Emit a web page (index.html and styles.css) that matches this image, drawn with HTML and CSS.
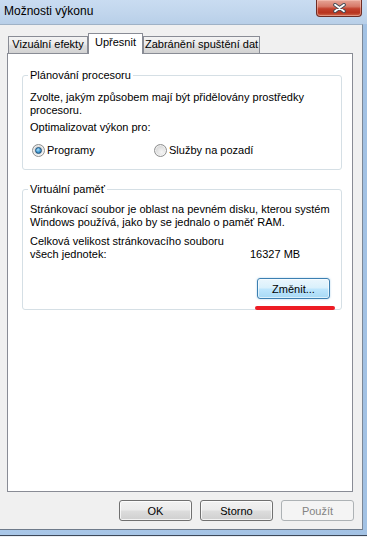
FILE: index.html
```html
<!DOCTYPE html>
<html lang="cs">
<head>
    <meta charset="UTF-8">
    <meta name="viewport" content="width=device-width, initial-scale=1.0">
    <title>Možnosti výkonu</title>
    <link rel="stylesheet" href="styles.css">
</head>
<body>
    <div class="window">
        <div class="titlebar">
            <span class="title">Možnosti výkonu</span>
            <div class="close">
                <svg width="13" height="10" viewBox="0 0 13 10">
                    <path d="M2 1.8 L11 8.2 M11 1.8 L2 8.2" stroke="#3f4a55" stroke-width="3.6" stroke-linecap="round"/>
                    <path d="M2 1.8 L11 8.2 M11 1.8 L2 8.2" stroke="#ffffff" stroke-width="1.8" stroke-linecap="round"/>
                </svg>
            </div>
        </div>

        <div class="client">
            <div class="tabs">
                <div class="tab tab-visual">Vizuální efekty</div>
                <div class="tab tab-active">Upřesnit</div>
                <div class="tab tab-dep">Zabránění spuštění dat</div>
            </div>

            <div class="panel">
                <fieldset class="group group-cpu">
                    <legend>Plánování procesoru</legend>
                    <p>Zvolte, jakým způsobem mají být přidělovány prostředky<br>procesoru.</p>
                    <p class="optimize">Optimalizovat výkon pro:</p>
                    <div class="radios">
                        <label class="radio"><span class="dot checked"></span>Programy</label>
                        <label class="radio"><span class="dot"></span>Služby na pozadí</label>
                    </div>
                </fieldset>

                <fieldset class="group group-vm">
                    <legend>Virtuální paměť</legend>
                    <p>Stránkovací soubor je oblast na pevném disku, kterou systém<br>Windows používá, jako by se jednalo o paměť RAM.</p>
                    <div class="total">
                        <span>Celková velikost stránkovacího souboru<br>všech jednotek:</span>
                        <span>16327 MB</span>
                    </div>
                    <div class="actions">
                        <button class="btn btn-default">Změnit...</button>
                        <span class="mark"></span>
                    </div>
                </fieldset>
            </div>

            <div class="buttons">
                <button class="btn">OK</button>
                <button class="btn">Storno</button>
                <button class="btn" disabled>Použít</button>
            </div>
        </div>
    </div>
</body>
</html>
```

FILE: styles.css
```css
html {
    background-color: #e9eef4;
}
body {
    margin: 0;
    font-family: "Liberation Sans", Arial, sans-serif;
    font-size: 11px;
    color: #000;
}
.window {
    width: 367px;
    height: 535px;
    border-bottom: 1px solid #3d4858;
    background: linear-gradient(90deg, #a9c7e8, #a3c2e4);
}
.titlebar {
    height: 24px;
    display: flex;
    justify-content: space-between;
    align-items: flex-start;
    background: linear-gradient(180deg, #c9dcf1 0%, #c0d5ec 60%, #b8cfe8 100%);
}
.title {
    padding-left: 4px;
    margin-top: 4px;
    font-size: 12px;
    line-height: 14px;
    color: #000;
}
.close {
    width: 46px;
    height: 17px;
    margin-right: 5px;
    box-sizing: border-box;
    border: 1px solid #6e2c24;
    border-top: none;
    border-radius: 0 0 4px 4px;
    background: linear-gradient(180deg, #e6a597 0%, #d77a69 40%, #c2412d 55%, #b8341f 80%, #cf6a4d 100%);
    box-shadow: inset 0 0 0 1px rgba(255, 210, 200, 0.45);
    display: flex;
    align-items: center;
    justify-content: center;
}
.client {
    width: 363px;
    height: 506px;
    box-sizing: border-box;
    border-top: 1px solid #9fb2c6;
    border-right: 1px solid #7c8796;
    border-bottom: 1px solid #6f7b8b;
    background-color: #f0f0f0;
    padding: 8px 9px 8px 7px;
}
.tabs {
    display: flex;
    align-items: flex-end;
    height: 20px;
    padding-left: 1px;
}
.tab {
    box-sizing: border-box;
    height: 17px;
    border: 1px solid #898c95;
    border-bottom: none;
    background: linear-gradient(180deg, #f3f3f3 0%, #ebebeb 45%, #dedede 55%, #d2d2d2 100%);
    text-align: center;
    line-height: 15px;
    white-space: nowrap;
}
.tab-visual {
    width: 80px;
}
.tab-active {
    width: 55px;
    height: 21px;
    margin-bottom: -1px;
    padding-top: 1px;
    background: #fff;
    position: relative;
    z-index: 1;
}
.tab-dep {
    width: 117px;
}
.panel {
    height: 439px;
    box-sizing: border-box;
    border: 1px solid #898c95;
    background-color: #fff;
    padding: 15px 0 0 14px;
}
.group {
    width: 320px;
    box-sizing: border-box;
    margin: 0;
    min-width: 0;
    border: 1px solid #d5dfe5;
    border-radius: 3px;
    padding: 9px 11px 12px 7px;
}
.group legend {
    padding: 0 2px;
    margin-left: -2px;
    line-height: 13px;
}
.group p {
    margin: 0;
    line-height: 13px;
    white-space: nowrap;
}
.group .optimize {
    margin-top: 4px;
}
.radios {
    display: grid;
    grid-template-columns: 122px auto;
    margin-top: 10px;
    padding-left: 2px;
}
.radio {
    display: flex;
    align-items: center;
    gap: 2px;
    line-height: 13px;
}
.dot {
    width: 13px;
    height: 13px;
    box-sizing: border-box;
    border-radius: 50%;
    border: 1px solid #8e8f8f;
    background: radial-gradient(circle at 60% 65%, #f6f6f6 0%, #e2e2e2 45%, #c9c9c9 100%);
    box-shadow: inset 0 0 0 1px rgba(255, 255, 255, 0.6);
}
.dot.checked::after {
    content: "";
    display: block;
    width: 7px;
    height: 7px;
    margin: 2px;
    box-sizing: border-box;
    border-radius: 50%;
    border: 1px solid #1d4f78;
    background: radial-gradient(circle at 40% 35%, #b4e0fa 0%, #4ea6dc 45%, #1b5d93 100%);
}
.group-vm {
    margin-top: 13px;
    padding-top: 7px;
    padding-bottom: 10px;
}
.total {
    display: grid;
    grid-template-columns: 220px auto;
    align-items: end;
    margin-top: 6px;
    line-height: 13px;
    white-space: nowrap;
}
.actions {
    position: relative;
    display: flex;
    justify-content: flex-end;
    margin-top: 17px;
}
.mark {
    position: absolute;
    right: -5px;
    top: 28px;
    width: 80px;
    height: 4px;
    border-radius: 2px;
    background-color: #ed1c24;
}
.btn {
    width: 73px;
    height: 21px;
    box-sizing: border-box;
    padding: 0;
    border: 1px solid #707070;
    border-radius: 3px;
    background: linear-gradient(180deg, #f2f2f2 0%, #ebebeb 48%, #dddddd 52%, #cfcfcf 100%);
    box-shadow: inset 0 0 0 1px rgba(255, 255, 255, 0.75);
    font-family: inherit;
    font-size: 11px;
    color: #000;
}
.btn-default {
    border-color: #3c7fb1;
    background: linear-gradient(180deg, #eaf6fd 0%, #d9f0fc 48%, #bee6fd 52%, #a7d9f5 100%);
    box-shadow: inset 0 0 0 1px rgba(255, 255, 255, 0.6), 0 0 2px rgba(96, 170, 220, 0.6);
}
.btn:disabled {
    border-color: #adb2b5;
    background: #f4f4f4;
    box-shadow: none;
    color: #838383;
}
.buttons {
    display: flex;
    justify-content: flex-end;
    gap: 8px;
    margin-top: 8px;
    margin-right: -1px;
}
```
